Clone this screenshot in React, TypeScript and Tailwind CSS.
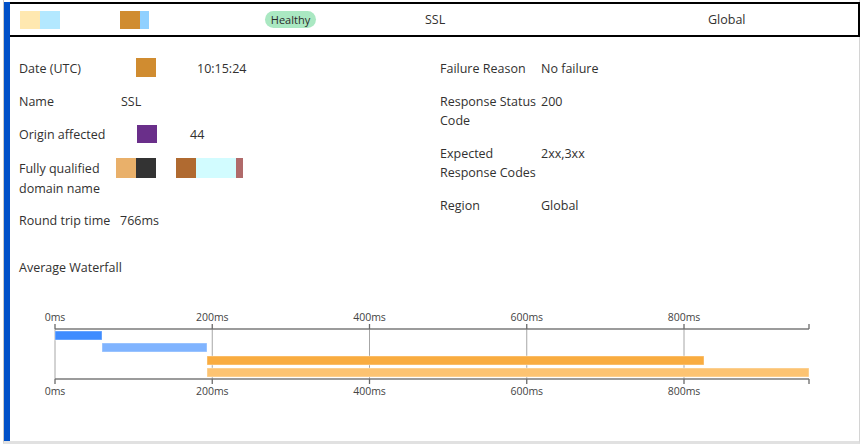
import React from "react";

const font = { fontFamily: '"Open Sans", "Noto Sans", sans-serif' };

function Swatch({ c, w = 20, h = 20 }: { c: string; w?: number; h?: number }) {
  return <span className="block shrink-0" style={{ background: c, width: w, height: h }} />;
}

function Chart() {
  const x = (ms: number) => 45 + ms * 0.78625;
  const ticks = [0, 200, 400, 600, 800];
  const end = 799;
  return (
    <svg width="849" height="95" viewBox="0 0 849 95" className="block">
      {ticks.slice(1).map((t) => (
        <line key={"g" + t} x1={x(t)} y1={23} x2={x(t)} y2={73} stroke="#a6a6a6" strokeWidth={1} />
      ))}
      <line x1={45} y1={23} x2={45} y2={73} stroke="#a6a6a6" strokeWidth={1} />
      <line x1={45} y1={23} x2={end} y2={23} stroke="#7a7a7a" strokeWidth={1.3} />
      <line x1={45} y1={73} x2={end} y2={73} stroke="#7a7a7a" strokeWidth={1.3} />
      {[...ticks.map(x), end].map((tx, i) => (
        <g key={"t" + i}>
          <line x1={tx} y1={18} x2={tx} y2={23} stroke="#6a6a6a" strokeWidth={1.3} />
          <line x1={tx} y1={73} x2={tx} y2={78} stroke="#6a6a6a" strokeWidth={1.3} />
        </g>
      ))}
      {ticks.map((t) => (
        <g key={"l" + t} fill="#444" fontSize="10.5" textAnchor="middle" style={font}>
          <text x={x(t)} y={15}>{t}ms</text>
          <text x={x(t)} y={89}>{t}ms</text>
        </g>
      ))}
      <rect x={45} y={25} width={47} height={9} fill="#3f8cff" stroke="#ffffff" strokeOpacity={0.4} />
      <rect x={92} y={37} width={105} height={9} fill="#80b4ff" stroke="#ffffff" strokeOpacity={0.4} />
      <rect x={197} y={50} width={497} height={9} fill="#f9ac40" stroke="#ffffff" strokeOpacity={0.4} />
      <rect x={197} y={62} width={602} height={9} fill="#fcc372" stroke="#ffffff" strokeOpacity={0.4} />
    </svg>
  );
}

function Row({ label, children, lw = 97, className = "" }: { label: React.ReactNode; children?: React.ReactNode; lw?: number; className?: string }) {
  return (
    <div className={"flex items-start " + className}>
      <div className="shrink-0" style={{ width: lw }}>{label}</div>
      <div className="flex items-start">{children}</div>
    </div>
  );
}

export default function App() {
  return (
    <div className="w-[863px] h-[444px] bg-white flex pl-[3px] pr-[3px] text-[12.5px] leading-[19px] text-[#323130]" style={font}>
      <div className="flex-1 flex border-l border-[#c8c8c8] border-r border-r-[#d4d4d4] border-b-[3px] border-b-[#e1e1e1]">
        <div className="w-[6px] bg-[#0050c8] mt-[2px]" />
        <div className="flex-1 flex flex-col">
          {/* header */}
          <div className="mt-[2px] h-[35px] border-2 border-l-0 border-black flex items-center pl-[10px] -mr-[1px]">
            <div className="w-[100px] flex">
              <Swatch c="#ffe8b0" h={18} />
              <Swatch c="#b3e8ff" h={18} />
            </div>
            <div className="w-[145px] flex">
              <Swatch c="#d08c30" h={18} />
              <Swatch c="#90d0ff" w={9} h={18} />
            </div>
            <div className="w-[160px] flex">
              <span className="h-[17px] w-[51px] rounded-full bg-[#aae8c2] text-[11px] leading-[17px] text-center text-[#2a2a2a]">Healthy</span>
            </div>
            <div className="w-[283px]">SSL</div>
            <div>Global</div>
          </div>

          {/* details */}
          <div className="flex pt-[22px] pl-[9px]">
            <div className="w-[421px] flex flex-col gap-[14px]">
              <Row label="Date (UTC)">
                <span className="ml-[20px] mt-[-1px]"><Swatch c="#d08c30" h={19} /></span>
                <span className="ml-[41px]">10:15:24</span>
              </Row>
              <Row label="Name">
                <span className="ml-[5px]">SSL</span>
              </Row>
              <Row label="Origin affected">
                <span className="ml-[21px] mt-[0px]"><Swatch c="#6a2f8a" h={18} /></span>
                <span className="ml-[33px]">44</span>
              </Row>
              <Row className="mb-[-2px]" label={<><span className="block leading-[20px] mt-[1px]">Fully qualified</span><span className="block leading-[20px]">domain name</span></>}>
                <span className="mt-[0px] flex">
                  <Swatch c="#e9b06a" />
                  <Swatch c="#333333" />
                  <span className="w-[20px]" />
                  <Swatch c="#b06a30" />
                  <Swatch c="#d2fcff" w={40} />
                  <Swatch c="#b06a6a" w={7} />
                </span>
              </Row>
              <Row label="Round trip time">
                <span className="ml-[4px]">766ms</span>
              </Row>
            </div>
            <div className="flex flex-col gap-[14px]">
              <Row label="Failure Reason" lw={101}>No failure</Row>
              <Row label={<>Response Status<br />Code</>} lw={101}>200</Row>
              <Row label={<>Expected<br />Response Codes</>} lw={101}>2xx,3xx</Row>
              <Row label="Region" lw={101}>Global</Row>
            </div>
          </div>

          <div className="pl-[9px] mt-[28px]">Average Waterfall</div>
          <div className="mt-[29px]">
            <Chart />
          </div>
        </div>
      </div>
    </div>
  );
}
